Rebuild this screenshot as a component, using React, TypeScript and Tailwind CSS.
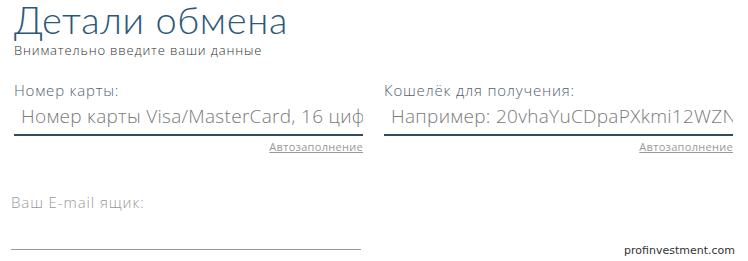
export default function App() {
  const fields = [
    { label: "Номер карты:", placeholder: "Номер карты Visa/MasterCard, 16 цифр" },
    { label: "Кошелёк для получения:", placeholder: "Например: 20vhaYuCDpaPXkmi12WZNcb8" },
  ];

  return (
    <div className="relative w-[748px] h-[261px] overflow-hidden bg-white font-['Open_Sans',sans-serif]">
      <div className="pl-[14px]">
        <h1 className="font-['Lato',sans-serif] text-[38px] leading-[38px] font-light text-[#2d5878] tracking-[0.6px]">Детали обмена</h1>
        <p className="mt-[4px] text-[13px] leading-[16px] font-light text-[#333] tracking-[0.85px]">Внимательно введите ваши данные</p>
      </div>

      <div className="mt-[23px] pl-[14px] flex gap-[21px]">
        {fields.map((f) => (
          <div key={f.label} className="w-[349px] flex flex-col">
            <label className="text-[15px] leading-[18px] font-light text-[#4f6272] tracking-[0.8px]">{f.label}</label>
            <div className="mt-[5px] border-b-2 border-[#2f4d60] pl-[7px] pb-[5px] overflow-hidden whitespace-nowrap">
              <span className="text-[19px] leading-[24px] font-light text-[#7a7a7a] tracking-[0.3px]">{f.placeholder}</span>
            </div>
            <a className="self-end mt-[5px] text-[11px] leading-[12px] text-[#999] underline tracking-[0.3px]">Автозаполнение</a>
          </div>
        ))}
      </div>

      <div className="mt-[37px] pl-[11px] w-[361px]">
        <label className="text-[15px] leading-[18px] font-light text-[#999] tracking-[0.9px]">Ваш E-mail ящик:</label>
        <div className="mt-[22px] border-b border-[#999] h-[14px]"></div>
      </div>

      <span className="absolute right-[13px] bottom-[4px] text-[11px] leading-[13px] text-[#333] font-['DejaVu_Sans',sans-serif]">
        profinvestment.com
      </span>
    </div>
  );
}
